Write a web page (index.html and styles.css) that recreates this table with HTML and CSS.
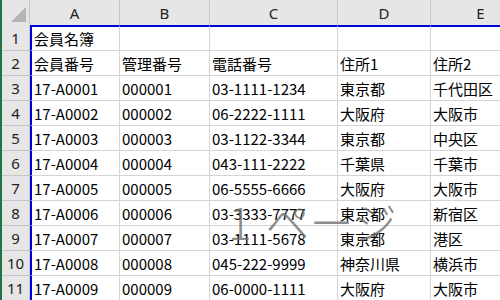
FILE: index.html
```html
<!DOCTYPE html>
<html lang="ja">
<head>
<meta charset="utf-8">
<title>会員名簿</title>
<link rel="stylesheet" href="styles.css">
</head>
<body>
<div class="app">
  <div class="edge"></div>
  <div class="sheet">
    <div class="corner"><span class="tri"></span></div>
    <div class="ch">A</div>
    <div class="ch">B</div>
    <div class="ch">C</div>
    <div class="ch">D</div>
    <div class="ch">E</div>

    <div class="rh first">1</div>
    <div class="c a top">会員名簿</div>
    <div class="c top"></div>
    <div class="c top"></div>
    <div class="c top"></div>
    <div class="c top"></div>

    <div class="rh">2</div>
    <div class="c a">会員番号</div>
    <div class="c">管理番号</div>
    <div class="c">電話番号</div>
    <div class="c">住所1</div>
    <div class="c">住所2</div>

    <div class="rh">3</div>
    <div class="c a">17-A0001</div>
    <div class="c">000001</div>
    <div class="c">03-1111-1234</div>
    <div class="c">東京都</div>
    <div class="c">千代田区</div>

    <div class="rh">4</div>
    <div class="c a">17-A0002</div>
    <div class="c">000002</div>
    <div class="c">06-2222-1111</div>
    <div class="c">大阪府</div>
    <div class="c">大阪市</div>

    <div class="rh">5</div>
    <div class="c a">17-A0003</div>
    <div class="c">000003</div>
    <div class="c">03-1122-3344</div>
    <div class="c">東京都</div>
    <div class="c">中央区</div>

    <div class="rh">6</div>
    <div class="c a">17-A0004</div>
    <div class="c">000004</div>
    <div class="c">043-111-2222</div>
    <div class="c">千葉県</div>
    <div class="c">千葉市</div>

    <div class="rh">7</div>
    <div class="c a">17-A0005</div>
    <div class="c">000005</div>
    <div class="c">06-5555-6666</div>
    <div class="c">大阪府</div>
    <div class="c">大阪市</div>

    <div class="rh">8</div>
    <div class="c a">17-A0006</div>
    <div class="c">000006</div>
    <div class="c">03-3333-7777</div>
    <div class="c">東京都</div>
    <div class="c">新宿区</div>

    <div class="rh">9</div>
    <div class="c a">17-A0007</div>
    <div class="c">000007</div>
    <div class="c">03-1111-5678</div>
    <div class="c">東京都</div>
    <div class="c">港区</div>

    <div class="rh">10</div>
    <div class="c a">17-A0008</div>
    <div class="c">000008</div>
    <div class="c">045-222-9999</div>
    <div class="c">神奈川県</div>
    <div class="c">横浜市</div>

    <div class="rh">11</div>
    <div class="c a">17-A0009</div>
    <div class="c">000009</div>
    <div class="c">06-0000-1111</div>
    <div class="c">大阪府</div>
    <div class="c">大阪市</div>
  </div>
  <div class="watermark"><span class="wm-num">1</span><span class="wm-word">ページ</span></div>
</div>
</body>
</html>
```

FILE: styles.css
```css
html, body {
  margin: 0;
  padding: 0;
  background: #ffffff;
}

.app {
  position: relative;
  display: flex;
  width: 500px;
  height: 300px;
  overflow: hidden;
  font-family: "Noto Sans CJK JP", "Noto Sans", sans-serif;
  font-size: 15px;
  color: #000;
}

.edge {
  width: 2px;
  flex: none;
  background: #217346;
}

.sheet {
  display: grid;
  grid-template-columns: 28px 90px 90px 128px 93px 100px;
  grid-template-rows: 25px 26px repeat(10, 25px);
  flex: none;
}

.corner {
  position: relative;
  background: #e6e6e6;
  border-right: 1px solid #c6c6c6;
  box-sizing: border-box;
}

.tri {
  position: absolute;
  right: 3px;
  bottom: 3px;
  width: 0;
  height: 0;
  border-left: 15px solid transparent;
  border-bottom: 15px solid #b4b4b4;
}

.ch {
  display: flex;
  align-items: center;
  justify-content: center;
  background: #e6e6e6;
  border-right: 1px solid #c6c6c6;
  box-sizing: border-box;
  color: #222;
  font-family: "Noto Sans", "Noto Sans CJK JP", sans-serif;
  font-size: 15px;
}

.rh {
  display: flex;
  align-items: center;
  justify-content: center;
  background: #e6e6e6;
  border-right: 1px solid #c6c6c6;
  border-bottom: 1px solid #c6c6c6;
  box-sizing: border-box;
  color: #222;
  font-family: "Noto Sans", "Noto Sans CJK JP", sans-serif;
  font-size: 15px;
}

.c {
  display: flex;
  align-items: center;
  padding-left: 2px;
  border-right: 1px solid #d4d4d4;
  border-bottom: 1px solid #d4d4d4;
  box-sizing: border-box;
  white-space: nowrap;
  overflow: hidden;
}

.c.a {
  border-left: 2px solid #0000d8;
}

.c.top {
  border-top: 2px solid #0000d8;
}

.watermark {
  position: absolute;
  left: 228px;
  top: 199px;
  display: flex;
  gap: 14px;
  font-size: 44px;
  font-weight: 300;
  line-height: 1;
  color: rgba(110, 110, 110, 0.8);
  pointer-events: none;
  white-space: nowrap;
  font-family: "Noto Sans CJK JP", sans-serif;
}
```
